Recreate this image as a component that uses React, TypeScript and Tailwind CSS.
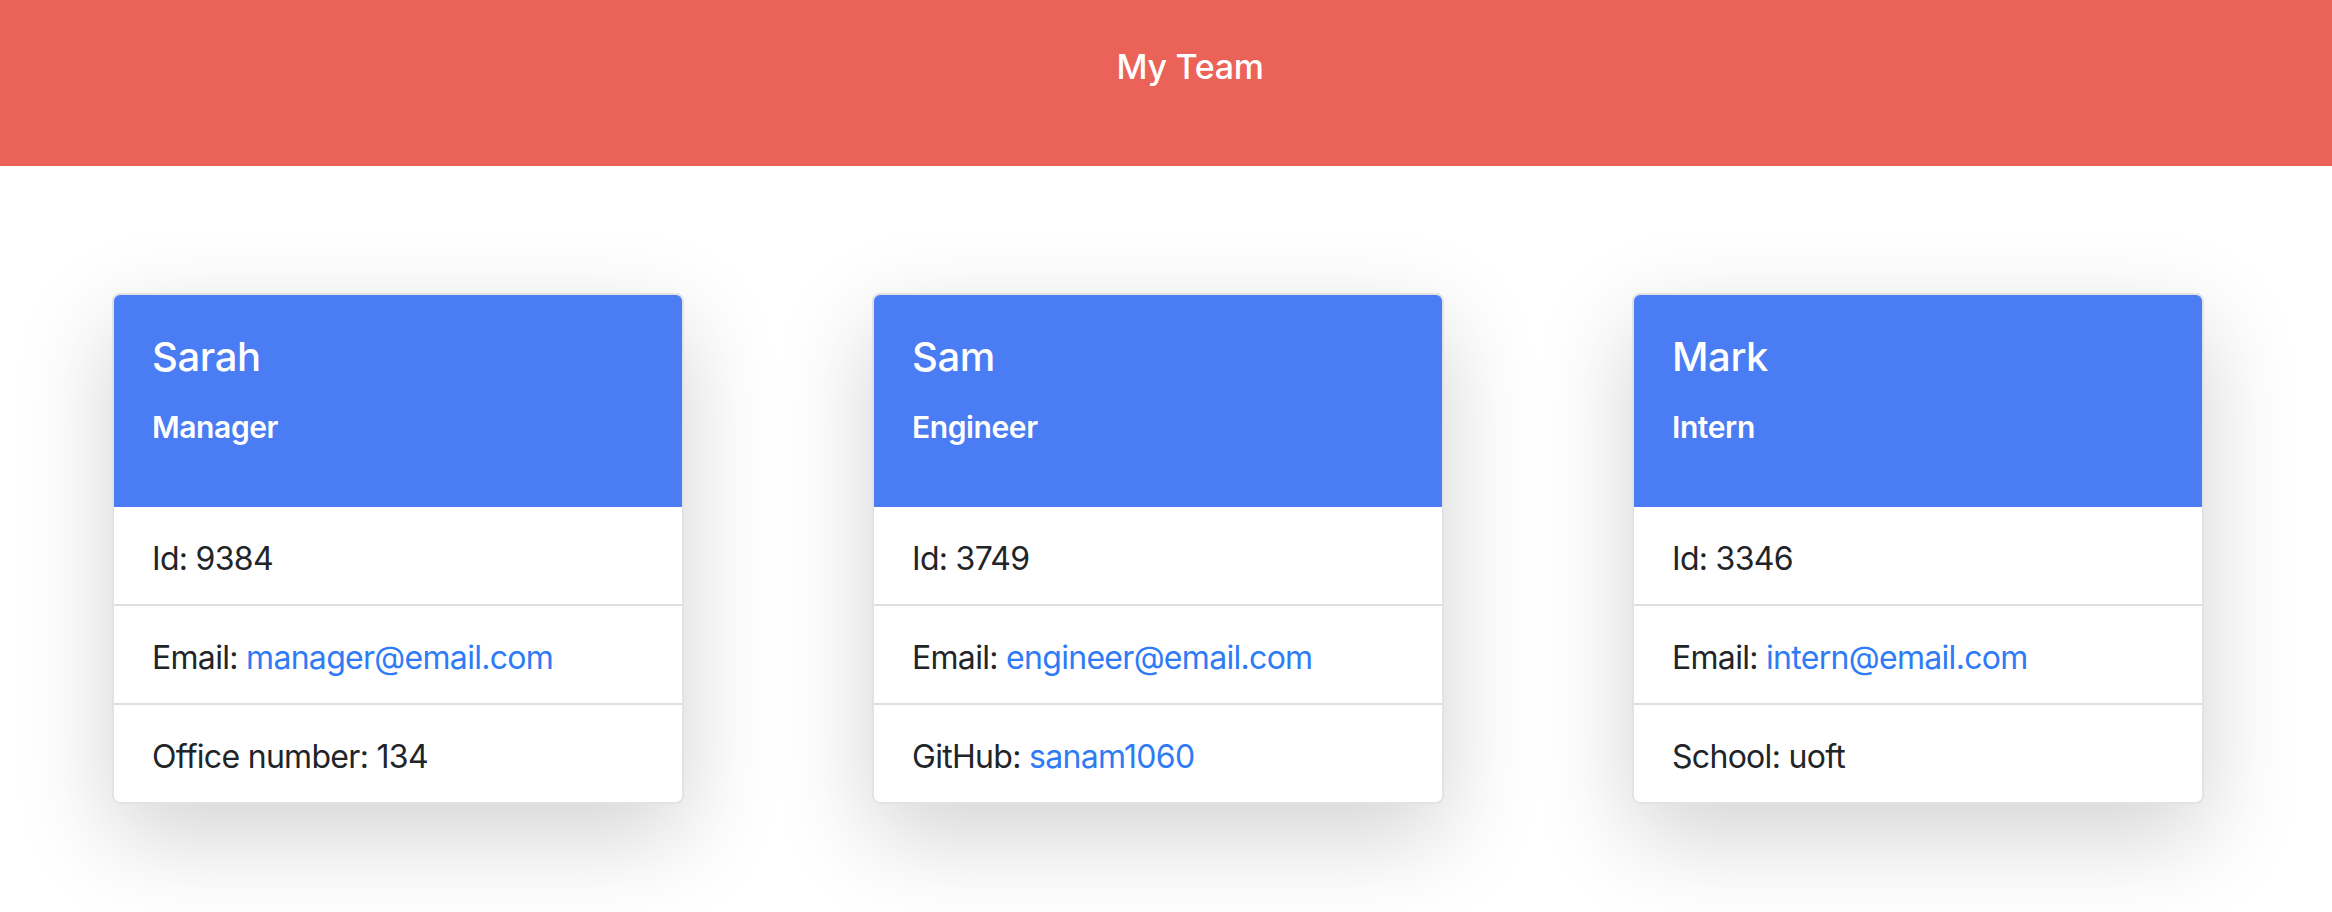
type Member = {
  name: string;
  role: string;
  id: number;
  email: string;
  extraLabel: string;
  extraValue: string;
  extraIsLink?: boolean;
};

const team: Member[] = [
  { name: "Sarah", role: "Manager", id: 9384, email: "manager@email.com", extraLabel: "Office number", extraValue: "134" },
  { name: "Sam", role: "Engineer", id: 3749, email: "engineer@email.com", extraLabel: "GitHub", extraValue: "sanam1060", extraIsLink: true },
  { name: "Mark", role: "Intern", id: 3346, email: "intern@email.com", extraLabel: "School", extraValue: "uoft" },
];

function MemberCard({ member }: { member: Member }) {
  return (
    <div className="w-[572px] rounded-[8px] border-2 border-[#e3e3e3] bg-white overflow-hidden shadow-[0_32px_96px_rgba(0,0,0,0.175)]">
      {/* card header */}
      <div className="bg-[#4a7cf4] text-white px-[38px] pt-[38px] pb-[62px]">
        <h5 className="text-[40px] leading-[48px] font-medium tracking-[-0.4px]">{member.name}</h5>
        <h6 className="mt-[28px] text-[30px] leading-[36px] font-semibold tracking-[-0.4px]">{member.role}</h6>
      </div>
      {/* details */}
      <ul className="text-[32px] leading-[48px] text-[#212529] tracking-[-0.7px]">
        <li className="px-[38px] pt-[28px] pb-[21px]">Id: {member.id}</li>
        <li className="px-[38px] pt-[28px] pb-[21px] border-t-2 border-[#dfdfdf]">
          Email: <a href="#" className="text-[#2f7bf5]">{member.email}</a>
        </li>
        <li className="px-[38px] pt-[28px] pb-[21px] border-t-2 border-[#dfdfdf]">
          {member.extraLabel}:{" "}
          {member.extraIsLink ? (
            <a href="#" className="text-[#2f7bf5]">{member.extraValue}</a>
          ) : (
            member.extraValue
          )}
        </li>
      </ul>
    </div>
  );
}

export default function App() {
  return (
    <div className="min-h-[912px] bg-white font-['Inter','Noto_Sans',sans-serif]">
      <header className="h-[166px] bg-[#eb6259] pt-[46px] pl-[48px] text-center">
        <h1 className="text-[34px] leading-[42px] font-medium tracking-[-0.3px] text-white">My Team</h1>
      </header>
      <main className="flex gap-[188px] pl-[112px] pt-[127px]">
        {team.map((m) => (
          <MemberCard key={m.name} member={m} />
        ))}
      </main>
    </div>
  );
}
